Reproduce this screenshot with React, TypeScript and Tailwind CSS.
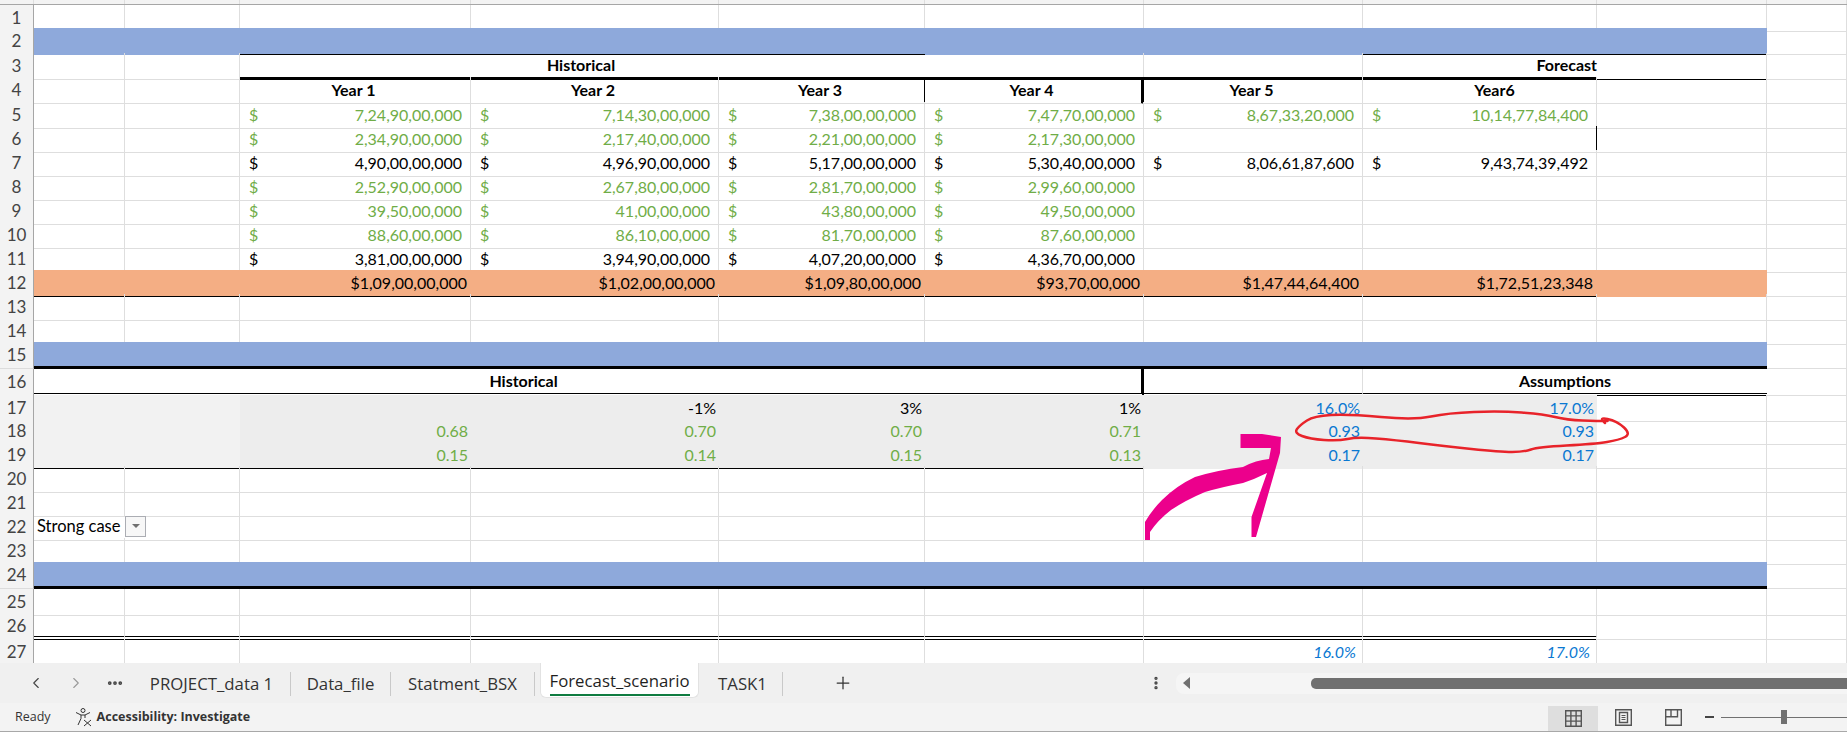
import React from 'react';
import { twMerge } from 'tailwind-merge';
import { ChevronLeft, ChevronRight, MoreHorizontal, MoreVertical, Plus } from 'lucide-react';

const COLS = 'grid grid-cols-[34px_91px_115px_231px_248px_206px_219px_219px_234px_170px_1fr]';
const GREEN = 'text-[#70ad47]';
const BLUE = 'text-[#0a78d2]';

const moneyRows = [
  { n: 5, color: GREEN, values: ['7,24,90,00,000', '7,14,30,00,000', '7,38,00,00,000', '7,47,70,00,000', '8,67,33,20,000', '10,14,77,84,400'] },
  { n: 6, color: GREEN, values: ['2,34,90,00,000', '2,17,40,00,000', '2,21,00,00,000', '2,17,30,00,000'] },
  { n: 7, color: 'text-black', values: ['4,90,00,00,000', '4,96,90,00,000', '5,17,00,00,000', '5,30,40,00,000', '8,06,61,87,600', '9,43,74,39,492'] },
  { n: 8, color: GREEN, values: ['2,52,90,00,000', '2,67,80,00,000', '2,81,70,00,000', '2,99,60,00,000'] },
  { n: 9, color: GREEN, values: ['39,50,00,000', '41,00,00,000', '43,80,00,000', '49,50,00,000'] },
  { n: 10, color: GREEN, values: ['88,60,00,000', '86,10,00,000', '81,70,00,000', '87,60,00,000'] },
  { n: 11, color: 'text-black', values: ['3,81,00,00,000', '3,94,90,00,000', '4,07,20,00,000', '4,36,70,00,000'] },
];

const totals = ['$1,09,00,00,000', '$1,02,00,00,000', '$1,09,80,00,000', '$93,70,00,000', '$1,47,44,64,400', '$1,72,51,23,348'];

const ratioRows = [
  { n: 18, values: ['0.68', '0.70', '0.70', '0.71'], forecast: '0.93' },
  { n: 19, values: ['0.15', '0.14', '0.15', '0.13'], forecast: '0.17' },
];

const redLoop: [number, number][] = [
  [1605, 423], [1598, 417], [1617, 421], [1631, 434], [1619, 440], [1595, 444], [1538, 447], [1524, 452],
  [1500, 452], [1443, 446], [1395, 440], [1357, 437], [1338, 441], [1310, 439], [1294, 433], [1300, 425],
  [1314, 416], [1348, 414], [1414, 420], [1448, 413], [1500, 411], [1543, 414], [1567, 420], [1598, 421], [1617, 421],
];

function smoothPath(points: [number, number][]) {
  let d = `M${points[0][0]} ${points[0][1]}`;
  for (let i = 1; i < points.length - 1; i++) {
    const midX = (points[i][0] + points[i + 1][0]) / 2;
    const midY = (points[i][1] + points[i + 1][1]) / 2;
    d += ` Q${points[i][0]} ${points[i][1]} ${midX} ${midY}`;
  }
  return d;
}

function Cell({ className, children }: { className?: string; children?: React.ReactNode }) {
  return (
    <div className={twMerge('flex items-center justify-end whitespace-nowrap border-r border-b border-[#dedede] pr-[3px]', className)}>
      {children}
    </div>
  );
}

function Row({ n, className, children }: { n: number; className?: string; children?: React.ReactNode }) {
  return (
    <div className={twMerge(COLS, 'h-6', className)}>
      <div className="flex items-center justify-center border-r border-b border-r-[#a6a6a6] border-b-[#dcdcdc] bg-[#f3f3f3] text-[17px] text-[#444]">{n}</div>
      {children}
    </div>
  );
}

function MoneyCell({ value, color, className }: { value?: string; color: string; className?: string }) {
  return (
    <Cell className={twMerge('justify-between pr-[8px] pl-[9px]', color, className)}>
      {value && <span>$</span>}
      {value && <span>{value}</span>}
    </Cell>
  );
}

function Blanks({ count }: { count: number }) {
  return (
    <>
      {Array.from({ length: count }, (_, i) => (
        <Cell key={i} />
      ))}
    </>
  );
}

function Sheet() {
  return (
    <div className="relative flex h-[663px] flex-col overflow-hidden bg-white font-['Lato',sans-serif] text-[16px] text-black">
      <div className={`${COLS} h-[5px] border-b border-[#a6a6a6] bg-[#f3f3f3]`}>
        {Array.from({ length: 11 }, (_, i) => (
          <div key={i} className="border-r border-[#dedede]" />
        ))}
      </div>

      <Row n={1} className="h-[23px]">
        <Blanks count={10} />
      </Row>
      <Row n={2} className="h-[25px]">
        <Cell className="col-span-2 border-0 bg-[#8ea9db]" />
        <Cell className="col-span-3 border-0 border-b border-b-black bg-[#8ea9db]" />
        <Cell className="col-span-2 border-0 bg-[#8ea9db]" />
        <Cell className="col-span-2 border-0 border-b border-b-black bg-[#8ea9db]" />
        <Cell />
      </Row>
      <Row n={3}>
        <Blanks count={2} />
        <Cell className="col-span-3 justify-center border-r-0 border-b-[3px] border-b-black font-bold">Historical</Cell>
        <Cell className="border-b-[3px] border-b-black" />
        <Cell className="border-b-[3px] border-b-black" />
        <Cell className="border-r-0 border-b-[3px] border-b-black pr-0 font-bold">Forecast</Cell>
        <Cell className="border-b-black" />
        <Cell />
      </Row>
      <Row n={4} className="h-[25px]">
        <Blanks count={2} />
        <Cell className="justify-center font-bold">Year 1</Cell>
        <Cell className="justify-center font-bold">Year 2</Cell>
        <Cell className="justify-center border-r-black font-bold">Year 3</Cell>
        <Cell className="justify-center border-r-[3px] border-r-black font-bold">Year 4</Cell>
        <Cell className="justify-center font-bold">Year 5</Cell>
        <Cell className="justify-center pr-0 pl-[30px] font-bold">Year6</Cell>
        <Blanks count={2} />
      </Row>

      {moneyRows.map((row) => (
        <Row key={row.n} n={row.n}>
          <Blanks count={2} />
          {[0, 1, 2, 3, 4, 5].map((i) => (
            <MoneyCell
              key={i}
              value={row.values[i]}
              color={row.color}
              className={row.n === 6 && i === 5 ? 'border-r-black' : ''}
            />
          ))}
          <Blanks count={2} />
        </Row>
      ))}

      <Row n={12}>
        <Cell className="col-span-2 border-0 border-b border-b-black bg-[#f4ae84]" />
        {totals.map((total) => (
          <Cell key={total} className="border-0 border-b border-b-black bg-[#f4ae84] pr-[4px]">
            {total}
          </Cell>
        ))}
        <Cell className="border-0 bg-[#f4ae84]" />
        <Cell />
      </Row>
      <Row n={13}>
        <Blanks count={10} />
      </Row>
      <Row n={14}>
        <Blanks count={10} />
      </Row>

      <Row n={15} className="h-[27px]">
        <Cell className="col-span-9 border-0 border-b-[3px] border-b-black bg-[#8ea9db]" />
        <Cell />
      </Row>
      <Row n={16} className="h-[26px]">
        <Cell className="col-span-6 justify-center border-r-[3px] border-r-black border-b-[3px] border-b-black pr-[128px] font-bold [border-bottom-style:double]">
          Historical
        </Cell>
        <Cell className="border-b-[3px] border-b-black [border-bottom-style:double]" />
        <Cell className="col-span-2 justify-center border-r-0 border-b-[3px] border-b-black pr-0 font-bold [border-bottom-style:double]">
          Assumptions
        </Cell>
        <Cell />
      </Row>
      <Row n={17} className="h-[23px]">
        <Cell className="col-span-2 border-r-0 border-b-[#e4e4e4] bg-[#f2f2f2]" />
        <Cell className="border-0 bg-[#ededed]" />
        <Cell className="border-0 bg-[#ededed]">-1%</Cell>
        <Cell className="border-0 bg-[#ededed]">3%</Cell>
        <Cell className="border-0 bg-[#ededed]">1%</Cell>
        <Cell className={twMerge('border-0 bg-[#ededed]', BLUE)}>16.0%</Cell>
        <Cell className={twMerge('border-0 bg-[#ededed]', BLUE)}>17.0%</Cell>
        <Blanks count={2} />
      </Row>
      {ratioRows.map((row) => (
        <Row key={row.n} n={row.n}>
          <Cell className={twMerge('col-span-2 border-r-0 bg-[#f2f2f2]', row.n === 19 ? 'border-b-black' : 'border-b-[#e4e4e4]')} />
          {row.values.map((value, i) => (
            <Cell key={i} className={twMerge('border-0 bg-[#ededed]', GREEN, row.n === 19 && 'border-b border-b-black')}>
              {value}
            </Cell>
          ))}
          <Cell className={twMerge('border-0 bg-[#ededed]', BLUE)}>{row.forecast}</Cell>
          <Cell className={twMerge('border-0 bg-[#ededed]', BLUE)}>{row.forecast}</Cell>
          <Blanks count={2} />
        </Row>
      ))}

      <Row n={20}>
        <Blanks count={10} />
      </Row>
      <Row n={21}>
        <Blanks count={10} />
      </Row>
      <Row n={22}>
        <Cell className="justify-start border-r-0 pl-[3px] text-[16.5px]">Strong case</Cell>
        <Cell className="justify-start pr-0">
          <div className="mb-[1px] flex h-[21px] w-[21px] items-center justify-center border border-[#abadb3] bg-[#f7f7f7]">
            <div className="h-0 w-0 border-x-[4px] border-t-[4px] border-x-transparent border-t-[#707070]" />
          </div>
        </Cell>
        <Blanks count={8} />
      </Row>
      <Row n={23}>
        <Blanks count={10} />
      </Row>
      <Row n={24} className="h-[27px]">
        <Cell className="col-span-9 border-0 border-b-[3px] border-b-black bg-[#8ea9db]" />
        <Cell />
      </Row>
      <Row n={25}>
        <Blanks count={10} />
      </Row>
      <Row n={26} className="h-[26px]">
        {[0, 1, 2, 3, 4, 5, 6, 7].map((i) => (
          <Cell key={i} className="border-b-[4px] border-b-black [border-bottom-style:double]" />
        ))}
        <Blanks count={2} />
      </Row>
      <Row n={27} className="h-[24px]">
        <Blanks count={6} />
        <Cell className={twMerge('pr-[6px] italic', BLUE)}>16.0%</Cell>
        <Cell className={twMerge('pr-[6px] italic', BLUE)}>17.0%</Cell>
        <Blanks count={2} />
      </Row>

      {/* pen marks drawn on top of the sheet */}
      <svg className="pointer-events-none absolute top-0 left-0 h-[732px] w-[1847px]" viewBox="0 0 1847 732" fill="none">
        <path d={smoothPath(redLoop)} stroke="#e8232a" strokeWidth="2.5" strokeLinecap="round" strokeLinejoin="round" />
        <path
          d="M1240.5 434 L1262 434 L1281 437 L1280 453 L1256 537 L1251.5 537 L1251.5 517 L1267 473 Q1255 479 1243 483 Q1222 487 1205 492 Q1186 500 1171 510 Q1158 520 1150 532 L1150 540 L1145 540 L1145 522 Q1152 510 1162 500 Q1176 486 1195 477 Q1218 470 1243 467 Q1256 460 1269 459 L1271 448 L1240.5 448 Z"
          fill="#ec008c"
        />
      </svg>
    </div>
  );
}

function SheetTab({ label, width }: { label: string; width: string }) {
  return (
    <div className={`mt-[1px] flex h-6 items-center justify-center border-r border-[#c9c9c9] ${width}`}>{label}</div>
  );
}

function TabBar() {
  return (
    <div className="flex h-10 items-center bg-[#f0f0f0] font-['Open_Sans',sans-serif] text-[16.8px] text-[#333]">
      <div className="flex items-center pl-[27px] text-[#444]">
        <ChevronLeft size={18} strokeWidth={1.5} />
        <ChevronRight size={18} strokeWidth={1.5} className="ml-[22px] text-[#999]" />
        <MoreHorizontal size={18} strokeWidth={3} className="ml-[21px]" />
      </div>
      <div className="ml-[9px] flex items-center">
        <SheetTab label="PROJECT_data 1" width="w-[158px]" />
        <SheetTab label="Data_file" width="w-[100px]" />
        <SheetTab label="Statment_BSX" width="w-[144px]" />
        <div className="mb-[5px] ml-[5px] flex h-[35px] w-[159px] flex-col items-center justify-end rounded-b-[6px] border-x border-b border-[#e2e2e2] bg-white pb-[1px] text-[#1f1f1f]">
          <span className="leading-[24px] font-medium">Forecast_scenario</span>
          <span className="mt-[1px] h-[2px] w-[140px] bg-[#107c41]" />
        </div>
        <div className="ml-[4px]">
          <SheetTab label="TASK1" width="w-[80px]" />
        </div>
      </div>
      <Plus size={20} strokeWidth={1.5} className="ml-[50px] text-[#333]" />
      <MoreVertical size={16} strokeWidth={3} className="ml-[295px] text-[#444]" />
      <div className="ml-[12px] flex h-[21px] flex-1 items-center rounded-l-[8px] bg-[#f5f5f5] pl-[7px]">
        <div className="h-0 w-0 border-y-[6px] border-r-[7px] border-y-transparent border-r-[#707070]" />
        <div className="ml-[121px] h-[11px] flex-1 rounded-l-[5px] bg-[#707070]" />
      </div>
    </div>
  );
}

function StatusBar() {
  return (
    <div className="flex h-[29px] items-center border-b border-[#a8a8a8] bg-[#f3f3f3] font-['Open_Sans',sans-serif] text-[12.5px] text-[#333]">
      <span className="ml-[15px]">Ready</span>
      <svg className="ml-[24px]" width="19" height="20" viewBox="0 0 19 20" fill="none" stroke="#333" strokeWidth="1">
        <circle cx="8" cy="3.5" r="2" />
        <path d="M1 5.5 L6 8 H10 L15 5.5 M6 8 V11.5 L3 18 M10 8 V11 M9 13 L16 19 M16 13 L9 19" />
      </svg>
      <span className="ml-[3px] font-bold">Accessibility: Investigate</span>
      <div className="ml-auto flex h-[25px] w-[50px] items-center justify-center self-end bg-[#dedede]">
        <svg width="17" height="17" viewBox="0 0 17 17" fill="none" stroke="#555" strokeWidth="1.4">
          <path d="M.7.7h15.6v15.6H.7zM.7 5.9h15.6M.7 11.1h15.6M5.9.7v15.6M11.1.7v15.6" />
        </svg>
      </div>
      <div className="flex w-[50px] justify-center">
        <svg width="17" height="17" viewBox="0 0 17 17" fill="none" stroke="#555" strokeWidth="1.4">
          <path d="M.7.7h15.6v15.6H.7zM4.5 3.5h8v10h-8z" />
          <path d="M6.5 6.5h4M6.5 8.5h4M6.5 10.5h4" strokeWidth="1" />
        </svg>
      </div>
      <div className="flex w-[50px] justify-center">
        <svg width="17" height="17" viewBox="0 0 17 17" fill="none" stroke="#555" strokeWidth="1.4">
          <path d="M.7.7h15.6v15.6H.7zM.7 7.7h11.8V.7M6 .7v7" />
        </svg>
      </div>
      <div className="ml-[7px] h-[2px] w-[9px] bg-[#444]" />
      <div className="ml-[7px] flex w-[126px] items-center">
        <div className="relative h-[1px] w-full bg-[#707070]">
          <div className="absolute top-[-7px] left-[60px] h-[14px] w-[6px] bg-[#707070]" />
        </div>
      </div>
    </div>
  );
}

export default function App() {
  return (
    <div className="flex h-[732px] w-[1847px] flex-col overflow-hidden">
      <Sheet />
      <TabBar />
      <StatusBar />
    </div>
  );
}
